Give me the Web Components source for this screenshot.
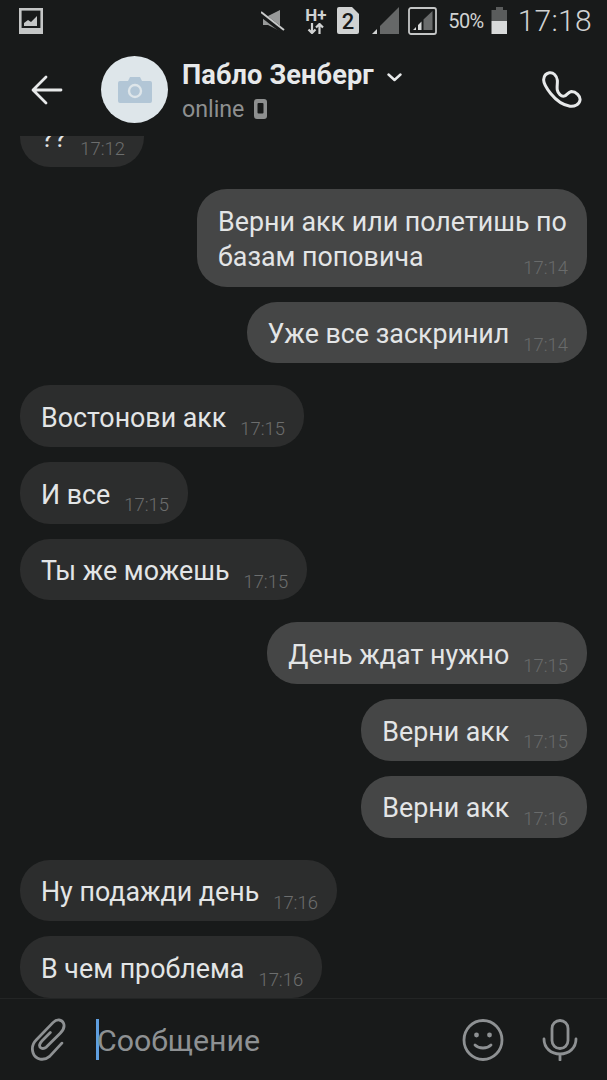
<!DOCTYPE html>
<html lang="ru">
<head>
<meta charset="utf-8">
<style>
  html, body { margin: 0; height: 100%; background: #181a1a; }
  body { font-family: Roboto, "Noto Sans", sans-serif; }
  chat-screen { height: 1080px; }
</style>
</head>
<body>
<chat-screen>
  <status-bar slot="status"></status-bar>
  <chat-header slot="header" name="Пабло Зенберг" status="online"></chat-header>
  <chat-bubble side="in" time="17:12">??</chat-bubble>
  <chat-bubble side="out" time="17:14" multi gap="big">Верни акк или полетишь по<br>базам поповича</chat-bubble>
  <chat-bubble side="out" time="17:14">Уже все заскринил</chat-bubble>
  <chat-bubble side="in" time="17:15" gap="big">Востонови акк</chat-bubble>
  <chat-bubble side="in" time="17:15">И все</chat-bubble>
  <chat-bubble side="in" time="17:15">Ты же можешь</chat-bubble>
  <chat-bubble side="out" time="17:15" gap="big">День ждат нужно</chat-bubble>
  <chat-bubble side="out" time="17:15">Верни акк</chat-bubble>
  <chat-bubble side="out" time="17:16">Верни акк</chat-bubble>
  <chat-bubble side="in" time="17:16" gap="big">Ну подажди день</chat-bubble>
  <chat-bubble side="in" time="17:16">В чем проблема</chat-bubble>
  <message-input slot="input" placeholder="Сообщение"></message-input>
</chat-screen>

<script>
// Экран чата: статус-бар, шапка, сообщения, поле ввода
class ChatScreen extends HTMLElement {
  constructor() {
    super();
    this.attachShadow({ mode: 'open' });
    this.shadowRoot.innerHTML = `
      <style>
        :host { display: flex; flex-direction: column; background: #181a1a; overflow: hidden; }
        .messages {
          flex: 1; min-height: 0; overflow: hidden;
          display: flex; flex-direction: column; justify-content: flex-end;
          padding: 0 20px;
        }
      </style>
      <slot name="status"></slot>
      <slot name="header"></slot>
      <div class="messages"><slot></slot></div>
      <slot name="input"></slot>
    `;
  }
}

class StatusBar extends HTMLElement {
  constructor() {
    super();
    this.attachShadow({ mode: 'open' });
    this.shadowRoot.innerHTML = `
      <style>
        :host { display: flex; align-items: center; height: 43px; box-sizing: border-box; padding: 0 15px 2px 19px; color: #d0d2d2; flex: none; }
        svg { display: block; flex: none; }
        .spacer { flex: 1; }
        .net { display: flex; flex-direction: column; align-items: center; margin-left: 20px; width: 21px; }
        .hplus { font-size: 17px; line-height: 14px; font-weight: 700; }
        .pct { font-size: 20px; letter-spacing: -0.600px; margin-left: 11px; }
        .clock { font-size: 30px; margin-left: 11px; font-weight: 300; letter-spacing: 0.300px; }
      </style>
      <svg width="24" height="26" viewBox="0 0 24 26">
        <rect x="1.300" y="1.300" width="21.400" height="23.400" fill="none" stroke="#c4c6c6" stroke-width="2.600"/>
        <rect x="1" y="20" width="22" height="5" fill="#c4c6c6"/>
        <path d="M5 18v-3l4-3 3 2 6-6v10z" fill="#c4c6c6"/>
      </svg>
      <div class="spacer"></div>
      <svg width="24" height="24" viewBox="0 0 24 24">
        <path d="M2 7h5l12-6v21l-12-6h-5z" fill="#989a9a"/>
        <path d="M0 5l23 18" stroke="#181a1a" stroke-width="5"/>
        <path d="M0 3l23 18" stroke="#c8caca" stroke-width="2"/>
      </svg>
      <div class="net">
        <span class="hplus">H+</span>
        <svg width="17" height="11" viewBox="0 0 17 11" fill="none" stroke="#d0d2d2" stroke-width="2.200" style="margin-top:1px">
          <path d="M5 0v10M1.500 6.500l3.500 3.500 3.500-3.500M12.500 11v-10M9 4.500l3.500-3.500 3.500 3.500"/>
        </svg>
      </div>
      <svg width="22" height="27" viewBox="0 0 22 27" style="margin-left:11px">
        <path d="M2 0h13l7 7v18a2 2 0 0 1-2 2h-18a2 2 0 0 1-2-2v-23a2 2 0 0 1 2-2z" fill="#d0d2d2"/>
        <text x="11" y="22" font-family="Roboto" font-weight="500" font-size="22" fill="#181a1a" text-anchor="middle">2</text>
      </svg>
      <svg width="27" height="27" viewBox="0 0 27 27" style="margin-left:13px">
        <path d="M0 27l5-5v5z" fill="#d0d2d2"/>
        <path d="M8 27v-8l19-19v27z" fill="#666868"/>
      </svg>
      <svg width="29" height="28" viewBox="0 0 29 28" style="margin-left:9px">
        <rect x="1" y="1" width="27" height="26" rx="2" fill="none" stroke="#c4c6c6" stroke-width="1.800"/>
        <path d="M5 23l3-3v3zM10 23v-5l3.500-3.500v8.500z" fill="#d8dada"/>
        <path d="M15.500 23v-10.500l9-8.500v19z" fill="#6a6c6c"/>
      </svg>
      <span class="pct">50%</span>
      <svg width="16" height="27" viewBox="0 0 16 27" style="margin-left:7px">
        <rect x="5" y="0" width="7" height="3" fill="#5a5c5c"/>
        <rect x="0.500" y="3" width="15.500" height="11" fill="#5a5c5c"/>
        <rect x="0.500" y="14" width="15.500" height="13" fill="#d8dada"/>
      </svg>
      <span class="clock">17:18</span>
    `;
  }
}

class ChatHeader extends HTMLElement {
  constructor() {
    super();
    this.attachShadow({ mode: 'open' });
    const name = this.getAttribute('name');
    const status = this.getAttribute('status');
    this.shadowRoot.innerHTML = `
      <style>
        :host { display: flex; align-items: center; height: 93px; padding: 0 25px 0 31px; flex: none; box-sizing: border-box; }
        svg { display: block; flex: none; }
        .avatar {
          width: 67px; height: 67px; border-radius: 50%; background: #dee6ea; margin-left: 38px;
          display: flex; align-items: center; justify-content: center; flex: none;
        }
        .info { margin-left: 14px; flex: 1; padding-top: 4px; }
        .name { display: flex; align-items: center; font-size: 27.200px; letter-spacing: 0.100px; font-weight: 700; color: #e7e9ea; line-height: 33px; }
        .name svg { margin-left: 13px; margin-top: 4px; }
        .status { display: flex; align-items: center; font-size: 23.200px; color: #8e9090; line-height: 30px; margin-top: 2px; }
        .status svg { margin-left: 10px; }
      </style>
      <svg width="32" height="30" viewBox="0 0 32 30" fill="none" stroke="#e7e9ea" stroke-width="2.800" stroke-linecap="round" stroke-linejoin="round">
        <path d="M30 15h-27M15 2l-13 13 13 13"/>
      </svg>
      <div class="avatar">
        <svg width="34" height="26" viewBox="0 0 34 26">
          <path d="M2 4h8l2-4h10l2 4h8a2 2 0 0 1 2 2v18a2 2 0 0 1-2 2h-30a2 2 0 0 1-2-2v-18a2 2 0 0 1 2-2z" fill="#b2c6d6"/>
          <circle cx="17" cy="14" r="6" fill="none" stroke="#dee6ea" stroke-width="2.400"/>
        </svg>
      </div>
      <div class="info">
        <div class="name">${name}
          <svg width="15" height="9" viewBox="0 0 15 9" fill="none" stroke="#e7e9ea" stroke-width="2.400" stroke-linecap="round" stroke-linejoin="round"><path d="M1.500 1.500l6 5.500 6-5.500"/></svg>
        </div>
        <div class="status">${status}
          <svg width="13" height="20" viewBox="0 0 13 20"><rect width="13" height="20" rx="3" fill="#8e9090"/><rect x="3.500" y="4" width="6" height="10.500" rx="1" fill="#181a1a"/></svg>
        </div>
      </div>
      <svg width="40" height="37" viewBox="40 25 120 110" fill="none" stroke="#e7e9ea" stroke-width="9" stroke-linejoin="round">
        <path d="M62 30C74 28 84 38 86 52C87 62 84 72 86 82C88 92 98 102 106 100C114 98 118 88 128 86C142 86 156 100 154 112C152 124 138 132 124 130C104 127 82 112 66 92C52 74 44 62 45 50C46 40 52 32 62 30Z"/>
      </svg>
    `;
  }
}

class ChatBubble extends HTMLElement {
  constructor() {
    super();
    this.attachShadow({ mode: 'open' });
    const time = this.getAttribute('time');
    this.shadowRoot.innerHTML = `
      <style>
        :host { display: flex; flex: none; margin-top: 15px; justify-content: flex-start; }
        :host([gap="big"]) { margin-top: 22px; }
        :host([side="out"]) { justify-content: flex-end; }
        .b {
          display: flex; align-items: flex-end; box-sizing: border-box;
          background: #2c2d2d; border-radius: 30px; padding: 15.500px 19px 10.500px 21px;
          font-size: 26.800px; line-height: 35.700px; color: #e3e5e6;
        }
        :host([side="out"]) .b { background: #454646; }
        .t { font-size: 18.400px; line-height: 22px; color: #6c6e6e; margin-left: 14px; flex: none; margin-bottom: -3px; font-weight: 300; }
        :host([side="out"]) .t { color: #696b6b; }
        /* Несколько строк: время уходит вправо на последней строке */
        :host([multi]) .b { display: block; width: 390px; }
        :host([multi]) .x { display: inline; }
        :host([multi]) .t { float: right; margin: 17px 0 -17px 0; }
      </style>
      <div class="b"><div class="x"><slot></slot></div><div class="t">${time}</div></div>
    `;
  }
}

class MessageInput extends HTMLElement {
  constructor() {
    super();
    this.attachShadow({ mode: 'open' });
    const ph = this.getAttribute('placeholder');
    this.shadowRoot.innerHTML = `
      <style>
        :host { display: flex; align-items: center; height: 82px; flex: none; box-sizing: border-box; border-top: 1px solid #232525; padding: 0 29px 0 30px; background: #181a1a; }
        svg { display: block; flex: none; }
        .field { flex: 1; margin-left: 30px; display: flex; align-items: center; height: 41px; }
        .cursor { width: 3px; height: 41px; background: #5f9fe0; flex: none; margin-right: -2px; }
        .ph { font-size: 30.300px; color: #8e9193; padding-top: 2px; }
      </style>
      <svg width="36" height="43" viewBox="29 24 108 130" fill="none" stroke="#8e9193" stroke-width="8.500" stroke-linecap="round" stroke-linejoin="round">
        <path d="M125 100L88 140C70 155 45 150 38 130C33 115 38 100 48 90L98 38C110 26 125 28 130 40C135 52 128 62 120 70L78 112C68 120 55 116 58 104C60 98 62 96 66 92L90 68"/>
      </svg>
      <div class="field"><span class="cursor"></span><span class="ph">${ph}</span></div>
      <svg width="42" height="42" viewBox="0 0 42 42" fill="none" stroke="#8e9193" stroke-width="2.800" stroke-linecap="round">
        <ellipse cx="21" cy="21" rx="19" ry="19.500"/>
        <circle cx="14.500" cy="16" r="2.400" fill="#8e9193" stroke="none"/>
        <circle cx="27.500" cy="16" r="2.400" fill="#8e9193" stroke="none"/>
        <path d="M13 26c4 4 12 4 16 0"/>
      </svg>
      <svg width="36" height="42" viewBox="0 0 36 42" fill="none" stroke="#8e9193" stroke-width="2.800" stroke-linecap="round" style="margin-left:38px">
        <rect x="10" y="1.500" width="16" height="28" rx="8"/>
        <path d="M2 20c0 9 7 15 16 15s16-6 16-15M18 35v6"/>
      </svg>
    `;
  }
}

customElements.define('chat-screen', ChatScreen);
customElements.define('status-bar', StatusBar);
customElements.define('chat-header', ChatHeader);
customElements.define('chat-bubble', ChatBubble);
customElements.define('message-input', MessageInput);
</script>
</body>
</html>
